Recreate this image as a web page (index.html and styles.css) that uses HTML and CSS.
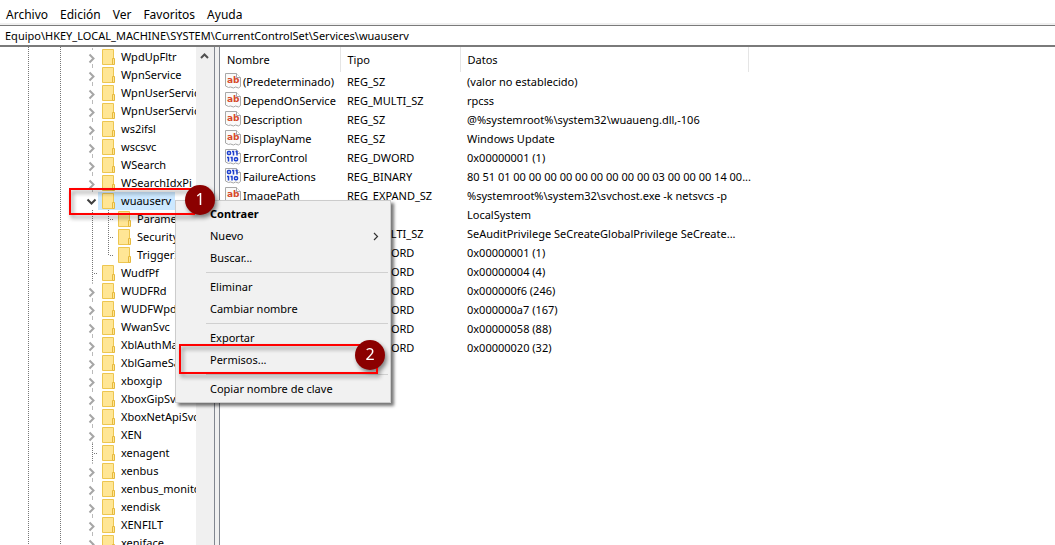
FILE: index.html
```html
<!DOCTYPE html>
<html lang="es">
<head>
<meta charset="utf-8">
<title>Editor del Registro</title>
<link rel="stylesheet" href="styles.css">
</head>
<body>
<svg class="defs" aria-hidden="true">
  <symbol id="more" viewBox="0 0 14 18"><path d="M8 1h1M8 17h1" stroke="#777"/><path d="M5.500 6.500l4 4-4 4" fill="none" stroke="#a6a6a6" stroke-width="2"/></symbol>
  <symbol id="open" viewBox="0 0 14 18"><path d="M3.500 7.500l4 4 4-4" fill="none" stroke="#404040" stroke-width="2"/></symbol>
  <symbol id="line" viewBox="0 0 14 18"><path d="M8.500 0v18" stroke="#777" stroke-dasharray="1 1"/></symbol>
  <symbol id="leaf" viewBox="0 0 14 18"><path d="M8.500 0v18M10 9.500h5" stroke="#777" stroke-dasharray="1 1"/></symbol>
  <symbol id="last" viewBox="0 0 14 18"><path d="M8.500 0v10M10 9.500h5" stroke="#777" stroke-dasharray="1 1"/></symbol>
  <symbol id="folder" viewBox="0 0 16 18"><path d="M2.500 1.500h11v15h-11z" fill="#ffe695" stroke="#edc650"/><path d="M12.500 10.500h2v6h-2z" fill="#ffe695" stroke="#e6b93c"/></symbol>
  <symbol id="string" viewBox="0 0 16 16"><path d="M.5.5h11l4 4v9l-2 1.500-3-1-2 1-3-1-2 .5-3-1.500z" fill="#fafafa" stroke="#a8a8a8"/><path d="M11.500.5v4h4" fill="#fff" stroke="#a8a8a8"/><text x="2" y="10" class="glyph">ab</text></symbol>
  <symbol id="binary" viewBox="0 0 16 16"><path d="M.5.5h11l4 4v9l-2 1.500-3-1-2 1-3-1-2 .5-3-1.500z" fill="#fafafa" stroke="#a8a8a8"/><path d="M11.500.5v4h4" fill="#fff" stroke="#a8a8a8"/><g fill="none" stroke="#1c3fd0" stroke-width="1.500"><rect x="2.500" y="2.500" width="3" height="3" rx="1"/><path d="M7 2.500h1.500v4M10.500 2.500H12v4M2 8.500h1.500v4M5.500 8.500H7v4"/><rect x="9.500" y="8.700" width="3" height="3" rx="1"/></g></symbol>
</svg>

<nav class="menubar">
  <button>Archivo</button><button>Edición</button><button>Ver</button><button>Favoritos</button><button>Ayuda</button>
</nav>
<input class="address" aria-label="Ruta" value="Equipo\HKEY_LOCAL_MACHINE\SYSTEM\CurrentControlSet\Services\wuauserv">

<main class="panes">
  <section class="tree-pane">
    <ul class="tree">
      <li><svg class="guide"><use href="#more"/></svg><span class="key"><svg><use href="#folder"/></svg>WpdUpFltr</span></li>
      <li><svg class="guide"><use href="#more"/></svg><span class="key"><svg><use href="#folder"/></svg>WpnService</span></li>
      <li><svg class="guide"><use href="#more"/></svg><span class="key"><svg><use href="#folder"/></svg>WpnUserService</span></li>
      <li><svg class="guide"><use href="#more"/></svg><span class="key"><svg><use href="#folder"/></svg>WpnUserService</span></li>
      <li><svg class="guide"><use href="#more"/></svg><span class="key"><svg><use href="#folder"/></svg>ws2ifsl</span></li>
      <li><svg class="guide"><use href="#more"/></svg><span class="key"><svg><use href="#folder"/></svg>wscsvc</span></li>
      <li><svg class="guide"><use href="#more"/></svg><span class="key"><svg><use href="#folder"/></svg>WSearch</span></li>
      <li><svg class="guide"><use href="#more"/></svg><span class="key"><svg><use href="#folder"/></svg>WSearchIdxPi</span></li>
      <li><svg class="guide"><use href="#open"/></svg><span class="key selected"><svg><use href="#folder"/></svg>wuauserv</span></li>
      <li><svg class="guide outer"><use href="#line"/></svg><svg class="guide"><use href="#leaf"/></svg><span class="key"><svg><use href="#folder"/></svg>Parameters</span></li>
      <li><svg class="guide outer"><use href="#line"/></svg><svg class="guide"><use href="#leaf"/></svg><span class="key"><svg><use href="#folder"/></svg>Security</span></li>
      <li><svg class="guide outer"><use href="#line"/></svg><svg class="guide"><use href="#last"/></svg><span class="key"><svg><use href="#folder"/></svg>TriggerInfo</span></li>
      <li><svg class="guide"><use href="#leaf"/></svg><span class="key"><svg><use href="#folder"/></svg>WudfPf</span></li>
      <li><svg class="guide"><use href="#more"/></svg><span class="key"><svg><use href="#folder"/></svg>WUDFRd</span></li>
      <li><svg class="guide"><use href="#more"/></svg><span class="key"><svg><use href="#folder"/></svg>WUDFWpdFs</span></li>
      <li><svg class="guide"><use href="#more"/></svg><span class="key"><svg><use href="#folder"/></svg>WwanSvc</span></li>
      <li><svg class="guide"><use href="#more"/></svg><span class="key"><svg><use href="#folder"/></svg>XblAuthManager</span></li>
      <li><svg class="guide"><use href="#more"/></svg><span class="key"><svg><use href="#folder"/></svg>XblGameSave</span></li>
      <li><svg class="guide"><use href="#more"/></svg><span class="key"><svg><use href="#folder"/></svg>xboxgip</span></li>
      <li><svg class="guide"><use href="#more"/></svg><span class="key"><svg><use href="#folder"/></svg>XboxGipSvc</span></li>
      <li><svg class="guide"><use href="#more"/></svg><span class="key"><svg><use href="#folder"/></svg>XboxNetApiSvc</span></li>
      <li><svg class="guide"><use href="#more"/></svg><span class="key"><svg><use href="#folder"/></svg>XEN</span></li>
      <li><svg class="guide"><use href="#leaf"/></svg><span class="key"><svg><use href="#folder"/></svg>xenagent</span></li>
      <li><svg class="guide"><use href="#more"/></svg><span class="key"><svg><use href="#folder"/></svg>xenbus</span></li>
      <li><svg class="guide"><use href="#more"/></svg><span class="key"><svg><use href="#folder"/></svg>xenbus_monitor</span></li>
      <li><svg class="guide"><use href="#more"/></svg><span class="key"><svg><use href="#folder"/></svg>xendisk</span></li>
      <li><svg class="guide"><use href="#more"/></svg><span class="key"><svg><use href="#folder"/></svg>XENFILT</span></li>
      <li><svg class="guide"><use href="#more"/></svg><span class="key"><svg><use href="#folder"/></svg>xeniface</span></li>
    </ul>
    <div class="scrollbar"><button aria-label="Subir"><svg viewBox="0 0 9 6"><path d="M1 5l3.500-3.500L8 5" fill="none" stroke="#505050" stroke-width="2"/></svg></button></div>
  </section>
  <section class="values-pane">
    <table class="values">
      <colgroup><col class="col-name"><col class="col-type"><col class="col-data"></colgroup>
      <thead><tr><th>Nombre</th><th>Tipo</th><th>Datos</th></tr></thead>
      <tbody>
        <tr><td><svg><use href="#string"/></svg>(Predeterminado)</td><td>REG_SZ</td><td>(valor no establecido)</td></tr>
        <tr><td><svg><use href="#string"/></svg>DependOnService</td><td>REG_MULTI_SZ</td><td>rpcss</td></tr>
        <tr><td><svg><use href="#string"/></svg>Description</td><td>REG_SZ</td><td>@%systemroot%\system32\wuaueng.dll,-106</td></tr>
        <tr><td><svg><use href="#string"/></svg>DisplayName</td><td>REG_SZ</td><td>Windows Update</td></tr>
        <tr><td><svg><use href="#binary"/></svg>ErrorControl</td><td>REG_DWORD</td><td>0x00000001 (1)</td></tr>
        <tr><td><svg><use href="#binary"/></svg>FailureActions</td><td>REG_BINARY</td><td>80 51 01 00 00 00 00 00 00 00 00 00 03 00 00 00 14 00...</td></tr>
        <tr><td><svg><use href="#string"/></svg>ImagePath</td><td>REG_EXPAND_SZ</td><td>%systemroot%\system32\svchost.exe -k netsvcs -p</td></tr>
        <tr><td><svg><use href="#string"/></svg>ObjectName</td><td>REG_SZ</td><td>LocalSystem</td></tr>
        <tr><td><svg><use href="#string"/></svg>RequiredPrivileges</td><td>REG_MULTI_SZ</td><td>SeAuditPrivilege SeCreateGlobalPrivilege SeCreate...</td></tr>
        <tr><td><svg><use href="#binary"/></svg>ServiceSidType</td><td>REG_DWORD</td><td>0x00000001 (1)</td></tr>
        <tr><td><svg><use href="#binary"/></svg>Start</td><td>REG_DWORD</td><td>0x00000004 (4)</td></tr>
        <tr><td><svg><use href="#binary"/></svg>SvcMemHardLimitInMB</td><td>REG_DWORD</td><td>0x000000f6 (246)</td></tr>
        <tr><td><svg><use href="#binary"/></svg>SvcMemMidLimitInMB</td><td>REG_DWORD</td><td>0x000000a7 (167)</td></tr>
        <tr><td><svg><use href="#binary"/></svg>SvcMemSoftLimitInMB</td><td>REG_DWORD</td><td>0x00000058 (88)</td></tr>
        <tr><td><svg><use href="#binary"/></svg>Type</td><td>REG_DWORD</td><td>0x00000020 (32)</td></tr>
      </tbody>
    </table>
  </section>
</main>

<div class="context-menu">
  <button class="default">Contraer</button>
  <button>Nuevo<svg viewBox="0 0 6 9"><path d="M1 1l3.500 3.500L1 8" fill="none" stroke="#333" stroke-width="1.200"/></svg></button>
  <button>Buscar...</button>
  <hr>
  <button>Eliminar</button>
  <button>Cambiar nombre</button>
  <hr>
  <button>Exportar</button>
  <button>Permisos...</button>
  <hr>
  <button>Copiar nombre de clave</button>
</div>

<div class="callout callout-key"><span class="step">1</span></div>
<div class="callout callout-permissions"><span class="step">2</span></div>
</body>
</html>
```
FILE: styles.css
```css
* { box-sizing: border-box; }

body {
  margin: 0;
  height: 100vh;
  display: flex;
  flex-direction: column;
  overflow: hidden;
  position: relative;
  background: #fff;
  color: #000;
  font: 11px/18px "Noto Sans", "Open Sans", sans-serif;
}

button, input {
  font: inherit;
  color: inherit;
  border: 0;
  background: none;
  padding: 0;
}

.defs { position: absolute; width: 0; height: 0; }
.glyph { font: bold 9px "DejaVu Sans", sans-serif; fill: #d6492a; }

.menubar {
  display: flex;
  gap: 12px;
  height: 25px;
  padding: 6px 6px 0;
  border-bottom: 2px solid #f0f0f0;
  font-size: 12px;
}

.address {
  height: 22px;
  padding: 0 5px;
  border-top: 1px solid #7a7a7a;
  border-bottom: 2px solid #7a7a7a;
  outline: 0;
}

.panes { flex: 1; display: flex; min-height: 0; }

.tree-pane {
  flex: 0 0 215px;
  min-width: 0;
  display: flex;
  border-right: 1px solid #828790;
}

.tree {
  --dots: repeating-linear-gradient(#777 0 1px, transparent 1px 2px);
  flex: 1;
  min-width: 0;
  margin: 0;
  padding: 1px 0 0 84px;
  list-style: none;
  overflow: hidden;
  background: var(--dots) 28px 0 / 1px 100% no-repeat, var(--dots) 60px 0 / 1px 100% no-repeat;
}

.tree li { display: flex; height: 18px; white-space: nowrap; }
.guide { flex: none; width: 14px; height: 18px; }
.guide.outer { margin-right: 2px; }
.key { display: flex; gap: 5px; padding: 0 4px 0 2px; }
.key svg { flex: none; width: 16px; height: 18px; }
.key.selected { background: #cce8ff; }

.scrollbar { flex: 0 0 18px; background: #f0f0f0; }
.scrollbar button { display: flex; width: 17px; height: 17px; align-items: center; justify-content: center; }
.scrollbar svg { width: 9px; height: 6px; }

.values-pane {
  flex: 1;
  min-width: 0;
  margin-left: 4px;
  border-left: 1px solid #828790;
  box-shadow: -4px 0 #f0f0f0;
}

.values { width: 528px; table-layout: fixed; border-collapse: collapse; }
.col-name { width: 120px; }
.col-type { width: 120px; }
.col-data { width: 288px; }
.values th {
  height: 25px;
  padding: 0 0 0 7px;
  text-align: left;
  font-weight: normal;
  border-right: 1px solid #e5e5e5;
}
.values td { height: 19px; padding: 0 0 0 7px; white-space: nowrap; }
.values td:first-child { padding-left: 5px; overflow: hidden; }
.values td svg { width: 16px; height: 16px; margin-right: 2px; vertical-align: top; }

.context-menu {
  position: absolute;
  left: 175px;
  top: 200px;
  width: 216px;
  padding: 2px;
  border: 1px solid #ccc;
  background: #f1f1f1;
  box-shadow: 3px 3px 3px #0008;
}
.context-menu button {
  display: flex;
  align-items: center;
  justify-content: space-between;
  width: 100%;
  height: 22px;
  padding: 0 9px 0 32px;
}
.context-menu .default { font-weight: bold; }
.context-menu svg { width: 6px; height: 9px; }
.context-menu hr { margin: 3px 0 3px 28px; border: 0; border-top: 1px solid #d0d0d0; }

.callout {
  position: absolute;
  border: 2px solid #f00;
  filter: drop-shadow(2px 3px 2px #0007);
}
.callout-key { left: 69px; top: 188px; width: 126px; height: 27px; }
.callout-permissions { left: 179px; top: 344px; width: 199px; height: 30px; }
.step {
  position: absolute;
  right: -22px;
  top: -5px;
  width: 30px;
  height: 30px;
  border-radius: 50%;
  background: #8b0000;
  color: #fff;
  font-size: 16px;
  line-height: 29px;
  text-align: center;
}
.callout-permissions .step { right: -9px; top: -6px; }
```
